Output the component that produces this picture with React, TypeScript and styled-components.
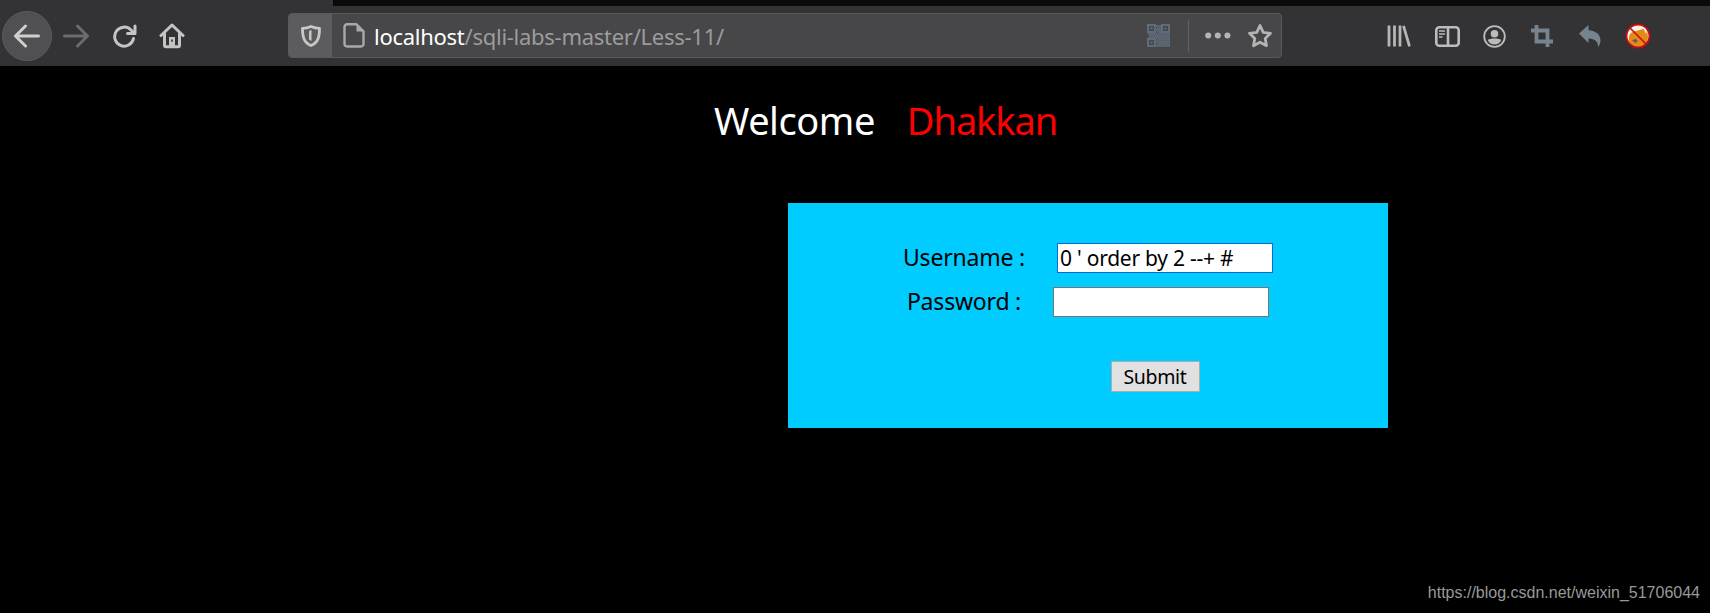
import styled, { createGlobalStyle } from 'styled-components';

const GlobalStyle = createGlobalStyle`
  html, body {
    margin: 0;
    padding: 0;
    background: #000;
  }
`;

const Page = styled.div`
  position: relative;
  display: flex;
  flex-direction: column;
  width: 1710px;
  height: 613px;
  overflow: hidden;
  background: #000;
  font-family: "Noto Sans", "Open Sans", sans-serif;
`;

const TabStrip = styled.div`
  display: flex;
  height: 6px;
  background: #0a0a0a;
`;
const TabStripLeft = styled.div`
  width: 333px;
  background: #333335;
`;

const Toolbar = styled.div`
  display: flex;
  align-items: center;
  height: 60px;
  background: #333335;
`;
const BackButton = styled.div`
  display: flex;
  align-items: center;
  justify-content: center;
  flex: none;
  box-sizing: border-box;
  width: 50px;
  height: 50px;
  margin-left: 2px;
  border-radius: 50%;
  background: #505052;
  border: 1px solid #5c5c5e;
`;
const ToolIcon = styled.div<{ $left: number; $width?: number }>`
  display: flex;
  align-items: center;
  justify-content: center;
  flex: none;
  width: ${(p) => p.$width ?? 26}px;
  height: 30px;
  margin-left: ${(p) => p.$left}px;
`;
const UrlBar = styled.div`
  display: flex;
  align-items: center;
  flex: none;
  box-sizing: border-box;
  width: 994px;
  height: 45px;
  margin-left: 103px;
  margin-top: -1px;
  background: #474749;
  border: 1px solid #5a5a5c;
  border-radius: 4px;
  overflow: hidden;
`;
const ShieldBox = styled.div`
  display: flex;
  align-items: center;
  justify-content: center;
  flex: none;
  width: 43px;
  height: 100%;
  background: #5c5c5e;
`;
const UrlText = styled.div`
  flex: 1;
  margin-left: 7px;
  font-size: 22px;
  line-height: 30px;
  letter-spacing: -0.27px;
  color: #9c9c9e;
  white-space: nowrap;
`;
const UrlHost = styled.span`
  color: #fff;
`;
const UrlDivider = styled.div`
  flex: none;
  width: 1px;
  height: 32px;
  margin-left: 18px;
  background: #626264;
`;

const Content = styled.main`
  display: flex;
  flex-direction: column;
  flex: 1;
`;
const Heading = styled.div`
  display: flex;
  margin: 31px 0 0 714px;
  font-size: 38px;
  line-height: 46px;
  letter-spacing: -0.45px;
`;
const HeadingWord = styled.span<{ $color: string; $gap?: number; $tight?: boolean }>`
  color: ${(p) => p.$color};
  margin-left: ${(p) => p.$gap ?? 0}px;
  letter-spacing: ${(p) => (p.$tight ? '-1.1px' : 'inherit')};
`;
const LoginPanel = styled.form`
  display: flex;
  flex-direction: column;
  align-items: center;
  box-sizing: border-box;
  width: 600px;
  height: 225px;
  margin: 60px 0 0 788px;
  padding-top: 40px;
  background: #00ccff;
  color: #000;
`;
const FieldRow = styled.div`
  display: flex;
  align-items: center;
  height: 30px;
  margin-bottom: 14px;
`;
const FieldLabel = styled.label`
  font-size: 23px;
  line-height: 28px;
  letter-spacing: -0.2px;
  margin: 0 32px 2px 0;
`;
const FieldInput = styled.input<{ $focus?: boolean }>`
  box-sizing: border-box;
  width: 216px;
  height: 30px;
  padding: 0 2px;
  border: 1px solid ${(p) => (p.$focus ? '#0a6ad6' : '#767676')};
  border-radius: 0;
  outline: none;
  background: #fff;
  color: #000;
  font-family: inherit;
  font-size: 21px;
  letter-spacing: -0.25px;
`;
const SubmitRow = styled.div`
  display: flex;
  margin: 30px 0 0 134px;
`;
const SubmitButton = styled.button`
  box-sizing: border-box;
  width: 89px;
  height: 31px;
  padding: 0;
  background: #e1e1e1;
  border: 1px solid #adadad;
  border-radius: 0;
  color: #000;
  font-family: inherit;
  font-size: 19.5px;
  letter-spacing: -0.35px;
`;
const Watermark = styled.div`
  position: absolute;
  right: 10px;
  bottom: 10px;
  font-family: "Liberation Sans", Arial, sans-serif;
  font-size: 16px;
  line-height: 20px;
  color: #999;
`;

// finder squares sit in three corners, the rest of the code is a fine checker
const qrCells: number[][] = [];
for (let y = 1; y < 23; y += 2) {
  for (let x = y % 4 === 1 ? 1 : 2; x < 23; x += 2) {
    const inFinder = (x < 9 && y < 9) || (x > 13 && y < 9) || (x < 9 && y > 13);
    if (!inFinder) qrCells.push([x, y]);
  }
}

const QrIcon = () => (
  <svg width="23" height="23" viewBox="0 0 23 23" fill="none" stroke="#5f6c7a" strokeWidth="2">
    <rect x="1" y="1" width="7" height="7" />
    <rect x="15" y="1" width="7" height="7" />
    <rect x="1" y="15" width="7" height="7" />
    <rect x="3.5" y="3.5" width="2" height="2" fill="#5f6c7a" stroke="none" />
    <rect x="17.5" y="3.5" width="2" height="2" fill="#5f6c7a" stroke="none" />
    <rect x="3.5" y="17.5" width="2" height="2" fill="#5f6c7a" stroke="none" />
    {qrCells.map(([x, y], i) => (
      <rect key={i} x={x} y={y} width="1.8" height="1.8" fill="#5f6c7a" stroke="none" />
    ))}
  </svg>
);

const FoxIcon = () => (
  <svg width="26" height="26" viewBox="0 0 26 26">
    <circle cx="13" cy="13" r="11.5" fill="#f4f0ea" />
    <path d="M4 13c1-3 4-5 7-5l7-2 4-1 1 9c0 6-4 10-10 10-5 0-9-3-9-7z" fill="#e58a17" />
    <path d="M7 17l4-1 2 2-3 2z" fill="#5a5f70" />
    <path d="M18 4l4 2-1 5z" fill="#fff" />
    <circle cx="13" cy="13" r="11.5" fill="none" stroke="#c00d12" strokeWidth="1.8" />
    <path d="M5 5l16 16" stroke="#c00d12" strokeWidth="1.6" />
  </svg>
);

export default function App() {
  return (
    <>
      <GlobalStyle />
      <Page>
        <TabStrip>
          <TabStripLeft />
        </TabStrip>
        <Toolbar>
          <BackButton>
            <svg width="28" height="24" viewBox="0 0 28 24" fill="none" stroke="#cfcfd0" strokeWidth="3" strokeLinecap="round" strokeLinejoin="round">
              <path d="M2.5 12h23M12.5 2L2.5 12l10 10" />
            </svg>
          </BackButton>
          <ToolIcon $left={11}>
            <svg width="26" height="24" viewBox="0 0 26 24" fill="none" stroke="#6c6c6e" strokeWidth="3" strokeLinecap="round" strokeLinejoin="round">
              <path d="M1.5 12h23M14.5 2l10 10-10 10" />
            </svg>
          </ToolIcon>
          <ToolIcon $left={23}>
            <svg width="24" height="24" viewBox="0 0 24 24" fill="none" stroke="#c4c4c5" strokeWidth="3" strokeLinecap="round" strokeLinejoin="round">
              <path d="M20.5 14.5A9.5 9.5 0 1 1 18 6l3 3" />
              <path d="M22 2v7.5h-7.5" />
            </svg>
          </ToolIcon>
          <ToolIcon $left={21}>
            <svg width="26" height="26" viewBox="0 0 26 26" fill="none" stroke="#c4c4c5" strokeWidth="3" strokeLinecap="round" strokeLinejoin="round">
              <path d="M2 12.5L13 2l11 10.5" />
              <path d="M5.5 10v12.2a1.5 1.5 0 0 0 1.5 1.5h12a1.5 1.5 0 0 0 1.5-1.5V10" />
              <rect x="10" y="14" width="6" height="9.5" fill="#c4c4c5" stroke="none" />
              <rect x="12.2" y="16.5" width="1.6" height="2.2" fill="#333335" stroke="none" />
            </svg>
          </ToolIcon>
          <UrlBar>
            <ShieldBox>
              <svg width="20" height="22" viewBox="0 0 20 22" fill="none">
                <path d="M10 1.5c3 1.3 5.5 1.8 8.5 1.8 0 8-1 14-8.5 17.2C2.5 17.3 1.5 11.3 1.5 3.3 4.5 3.3 7 2.8 10 1.5z" stroke="#c8c8c9" strokeWidth="2.8" strokeLinejoin="round" />
                <path d="M10.5 5L8 6v8.5l2.5 1.5z" fill="#c8c8c9" />
              </svg>
            </ShieldBox>
            <ToolIcon $left={9}>
              <svg width="22" height="25" viewBox="0 0 22 25" fill="none">
                <path d="M4 1.3h9.5l7 7V21a2.5 2.5 0 0 1-2.5 2.5H4A2.5 2.5 0 0 1 1.5 21V3.8A2.5 2.5 0 0 1 4 1.3z" stroke="#a9a9aa" strokeWidth="2.4" strokeLinejoin="round" />
                <path d="M13.5 2v6.5H20z" fill="#a9a9aa" />
              </svg>
            </ToolIcon>
            <UrlText>
              <UrlHost>localhost</UrlHost>/sqli-labs-master/Less-11/
            </UrlText>
            <QrIcon />
            <UrlDivider />
            <ToolIcon $left={16}>
              <svg width="26" height="7" viewBox="0 0 26 7" fill="#b4b4b5">
                <circle cx="3.2" cy="3.5" r="3" />
                <circle cx="12.8" cy="3.5" r="3" />
                <circle cx="22.4" cy="3.5" r="3" />
              </svg>
            </ToolIcon>
            <ToolIcon $left={16} $width={26}>
              <svg width="26" height="25" viewBox="0 0 26 25" fill="none" stroke="#b4b4b5" strokeWidth="2.8" strokeLinejoin="round">
                <path d="M13 2.5l3.2 6.8 7.3 1-5.3 5.1 1.3 7.3-6.5-3.5-6.5 3.5 1.3-7.3-5.3-5.1 7.3-1z" />
              </svg>
            </ToolIcon>
            <ToolIcon $left={8} $width={0} />
          </UrlBar>
          <ToolIcon $left={104}>
            <svg width="24" height="22" viewBox="0 0 24 22" fill="none" stroke="#b5b5b6" strokeWidth="2.8">
              <path d="M2 0.5v21M7.5 0.5v21M13 0.5v21M16.5 0.8l6 20.5" />
            </svg>
          </ToolIcon>
          <ToolIcon $left={22}>
            <svg width="25" height="21" viewBox="0 0 25 21" fill="none">
              <rect x="1.3" y="1.3" width="22.4" height="18.4" rx="3" stroke="#bcbcbd" strokeWidth="2.6" />
              <path d="M13 1v19" stroke="#bcbcbd" strokeWidth="2.6" />
              <path d="M4 5h6M4 8h6M4 11h3.5" stroke="#bcbcbd" strokeWidth="1.5" />
            </svg>
          </ToolIcon>
          <ToolIcon $left={21}>
            <svg width="23" height="23" viewBox="0 0 23 23" fill="none">
              <circle cx="11.5" cy="11.5" r="10.3" stroke="#bcbcbd" strokeWidth="1.8" />
              <circle cx="11.5" cy="8.8" r="3.8" fill="#bcbcbd" />
              <path d="M4.8 15c2-2 11.4-2 13.4 0-1 3-4 4.5-6.7 4.5S5.8 18 4.800 15z" fill="#bcbcbd" />
            </svg>
          </ToolIcon>
          <ToolIcon $left={22}>
            <svg width="22" height="22" viewBox="0 0 22 22" fill="none" stroke="#77838f" strokeWidth="3.8">
              <path d="M5.5 0v16.5H22" />
              <path d="M0 5.5h16.5V22" />
            </svg>
          </ToolIcon>
          <ToolIcon $left={22}>
            <svg width="22" height="22" viewBox="0 0 22 22" fill="#77838f">
              <path d="M0 8.5L9.5 0v5.2c7.500.3 12 4.600 12 10.300 0 2.600-1 4.800-2.500 6.500.6-4.800-3-8.700-9.500-8.600V18z" />
            </svg>
          </ToolIcon>
          <ToolIcon $left={22}>
            <FoxIcon />
          </ToolIcon>
        </Toolbar>
        <Content>
          <Heading>
            <HeadingWord $color="#fff">Welcome</HeadingWord>
            <HeadingWord $color="#ff0000" $gap={32} $tight>Dhakkan</HeadingWord>
          </Heading>
          <LoginPanel>
            <FieldRow>
              <FieldLabel>Username :</FieldLabel>
              <FieldInput $focus type="text" readOnly value="0 ' order by 2 --+ #" />
            </FieldRow>
            <FieldRow>
              <FieldLabel>Password :</FieldLabel>
              <FieldInput type="password" readOnly value="" />
            </FieldRow>
            <SubmitRow>
              <SubmitButton type="button">Submit</SubmitButton>
            </SubmitRow>
          </LoginPanel>
        </Content>
        <Watermark>https://blog.csdn.net/weixin_51706044</Watermark>
      </Page>
    </>
  );
}
